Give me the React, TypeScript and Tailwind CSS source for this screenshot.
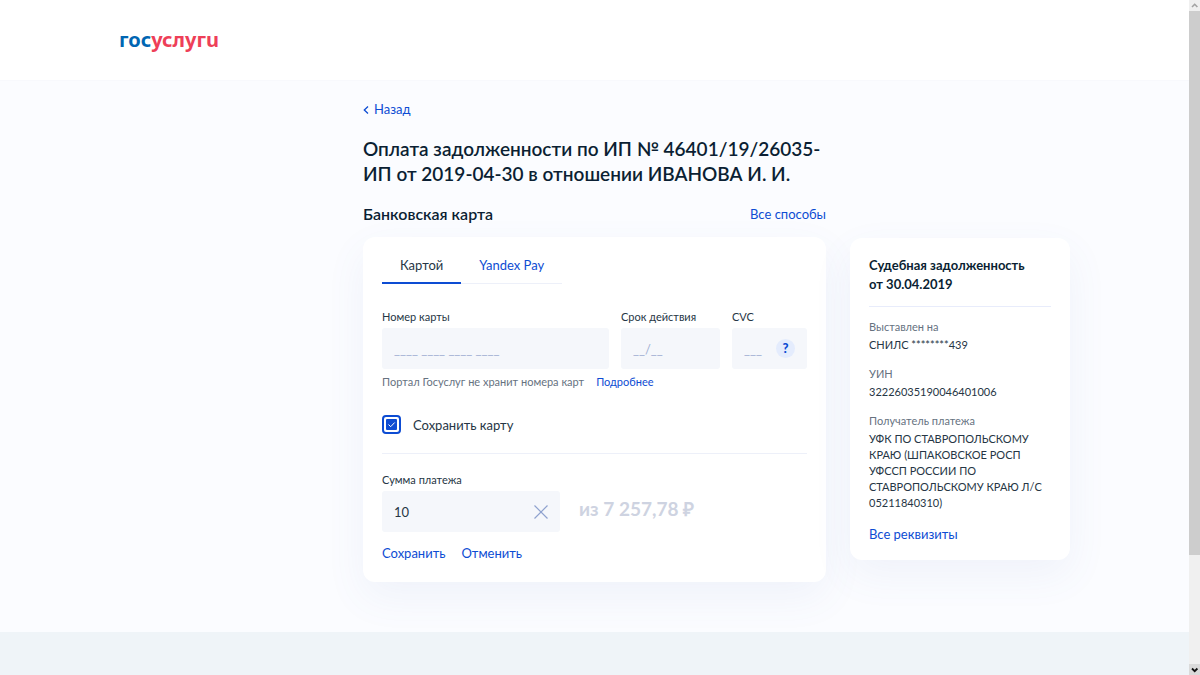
import { useState } from "react";
import type { ReactNode } from "react";

const details = [
  { label: "Выставлен на", value: "СНИЛС ********439" },
  { label: "УИН", value: "32226035190046401006" },
  {
    label: "Получатель платежа",
    value:
      "УФК ПО СТАВРОПОЛЬСКОМУ КРАЮ (ШПАКОВСКОЕ РОСП УФССП РОССИИ ПО СТАВРОПОЛЬСКОМУ КРАЮ Л/С 05211840310)",
  },
];

const tabs = ["Картой", "Yandex Pay"];

function Link({ children, className = "" }: { children: ReactNode; className?: string }) {
  return (
    <a href="#" className={`text-[#0d4cd3] hover:text-[#0b40b3] ${className}`}>
      {children}
    </a>
  );
}

function Header() {
  return (
    <header className="border-b border-[#f8f9fd] bg-white">
      <div className="mx-auto flex h-20 max-w-[951px] items-center">
        <a
          href="#"
          aria-label="госуслуги"
          className="font-['Noto_Sans','Open_Sans',sans-serif] text-[20px] leading-6 font-bold text-[#0066b3]"
        >
          гос<span className="text-[#ee3f58]">услугu</span>
        </a>
      </div>
    </header>
  );
}

function Tabs() {
  const [active, setActive] = useState(0);

  return (
    <div role="tablist" className="flex">
      {tabs.map((tab, i) => (
        <button
          key={tab}
          role="tab"
          type="button"
          aria-selected={i === active}
          onClick={() => setActive(i)}
          className={`h-7 px-[18px] ${
            i === active
              ? "border-b-2 border-[#0d4cd3] pb-2"
              : "border-b border-[#edf0f9] pb-[9px] text-[#0d4cd3]"
          }`}
        >
          {tab}
        </button>
      ))}
    </div>
  );
}

function CardFields() {
  const inputStyle =
    "mt-[3px] h-[41px] w-full rounded-[3px] bg-[#f5f7fb] px-3 placeholder:text-[#a3b1d3] outline-none";

  return (
    <div className="mt-[25px] flex gap-3">
      <div className="flex-1">
        <label htmlFor="number" className="block text-[11px] leading-4">
          Номер карты
        </label>
        <input id="number" placeholder="____ ____ ____ ____" className={inputStyle} />
      </div>
      <div className="w-[99px]">
        <label htmlFor="expires" className="block text-[11px] leading-4">
          Срок действия
        </label>
        <input id="expires" placeholder="__/__" className={inputStyle} />
      </div>
      <div className="w-[75px]">
        <label htmlFor="cvc" className="block text-[11px] leading-4">
          CVC
        </label>
        <div className="relative">
          <input id="cvc" placeholder="___" className={inputStyle} />
          <button
            type="button"
            className="absolute top-[14px] right-3 size-[19px] rounded-full bg-[#e4ecfd] text-[13px] leading-[19px] font-black text-[#0d4cd3]"
          >
            ?
          </button>
        </div>
      </div>
    </div>
  );
}

function SaveCard() {
  const [checked, setChecked] = useState(true);

  return (
    <label className="mt-[25px] flex items-center gap-3">
      <span className="relative size-[19px]">
        <input
          type="checkbox"
          checked={checked}
          onChange={(e) => setChecked(e.target.checked)}
          className="block size-[19px] appearance-none rounded-[4px] border-2 border-[#0d4cd3] bg-white"
        />
        {checked && (
          <svg viewBox="0 0 19 19" className="pointer-events-none absolute inset-0" fill="none">
            <rect x="4" y="4" width="11" height="11" rx="1" fill="#0d4cd3" />
            <path d="M6.5 9.5l2.2 2.2 4-4.2" stroke="#fff" strokeWidth="1" />
          </svg>
        )}
      </span>
      Сохранить карту
    </label>
  );
}

function Amount() {
  const [amount, setAmount] = useState("10");

  return (
    <div className="mt-[19px] border-t border-[#edf0f9] pt-[18px]">
      <label htmlFor="amount" className="block text-[11px] leading-4">
        Сумма платежа
      </label>
      <div className="mt-[3px] flex items-center gap-[19px]">
        <div className="relative w-[178px]">
          <input
            id="amount"
            value={amount}
            onChange={(e) => setAmount(e.target.value)}
            className="h-[41px] w-full rounded-[3px] bg-[#f5f7fb] pr-10 pl-3 outline-none"
          />
          <button
            type="button"
            aria-label="Очистить"
            onClick={() => setAmount("")}
            className="absolute top-[14px] right-3"
          >
            <svg width="14" height="14" viewBox="0 0 14 14" stroke="#8fa2cf" strokeWidth="1.2">
              <path d="M.5.5l13 13M13.5.5l-13 13" />
            </svg>
          </button>
        </div>
        <span className="pb-[5px] text-[19px] leading-6 font-bold text-[#ced3e1]">из 7 257,78 ₽</span>
      </div>
      <div className="mt-3 flex gap-4 text-[#0d4cd3]">
        <button type="button">Сохранить</button>
        <button type="button">Отменить</button>
      </div>
    </div>
  );
}

function Summary() {
  return (
    <aside className="mt-[157px] w-[220px] shrink-0 rounded-xl bg-white px-[19px] pt-[18px] pb-[17px] shadow-[0_15px_40px_rgba(80,120,190,0.07)]">
      <h3 className="border-b border-[#e8ecfb] pb-3 leading-[19px] font-bold whitespace-nowrap text-[#0b1f33]">
        Судебная задолженность
        <br />
        от 30.04.2019
      </h3>
      <dl className="mt-3 flex flex-col gap-[13px] text-[11px] leading-4">
        {details.map((item) => (
          <div key={item.label}>
            <dt className="text-[#66727f]">{item.label}</dt>
            <dd className="mt-0.5 -mr-1">{item.value}</dd>
          </div>
        ))}
      </dl>
      <Link className="mt-[14px] block">Все реквизиты</Link>
    </aside>
  );
}

function Scrollbar() {
  return (
    <div aria-hidden="true" className="flex h-screen w-[11px] shrink-0 flex-col bg-[#f0f0f0]">
      <svg width="11" height="11" viewBox="0 0 11 11" fill="none" stroke="#a3a3a3" strokeWidth="1.6">
        <path d="M3 7l2.7-2.7L8.4 7" />
      </svg>
      <div className="grow-5 bg-[#cdcdcd]" />
      <div className="grow" />
      <svg width="11" height="11" viewBox="0 0 11 11" fill="none" stroke="#111" strokeWidth="1.8">
        <path d="M0 0h11v11H0z" fill="#dadada" stroke="none" />
        <path d="M3 4.5l2.7 2.7L8.4 4.5" />
      </svg>
    </div>
  );
}

export default function App() {
  return (
    <div className="flex h-screen overflow-hidden font-['Lato',sans-serif] text-[13px] leading-[18px] text-[#263645]">
      <div className="flex flex-1 flex-col bg-[#fbfcff]">
        <Header />
        <div className="mx-auto flex w-full max-w-[951px] justify-end gap-6 pb-[50px]">
          <main className="w-[463px]">
            <a href="#" className="mt-[19px] flex items-center gap-[5px] text-[#0d4cd3]">
              <svg width="6" height="8" viewBox="0 0 6 8" fill="none" stroke="currentColor" strokeWidth="1.3" className="mt-0.5">
                <path d="M5 .5L1.3 4 5 7.5" />
              </svg>
              Назад
            </a>
            <h1 className="mt-[18px] text-[19px] leading-[25px] font-semibold text-[#0b1f33]">
              Оплата задолженности по ИП № 46401/19/26035-ИП от 2019-04-30 в отношении ИВАНОВА И. И.
            </h1>
            <div className="mt-[18px] flex items-center justify-between">
              <h2 className="text-[16px] leading-5 font-semibold text-[#0b1f33]">Банковская карта</h2>
              <Link>Все способы</Link>
            </div>
            <section className="mt-[13px] rounded-xl bg-white px-[19px] pt-[19px] pb-5 shadow-[0_15px_40px_rgba(80,120,190,0.07)]">
              <Tabs />
              <CardFields />
              <p className="mt-[5px] flex gap-3 text-[11px] leading-4 text-[#66727f]">
                Портал Госуслуг не хранит номера карт
                <Link>Подробнее</Link>
              </p>
              <SaveCard />
              <Amount />
            </section>
          </main>
          <div>
            <Summary />
          </div>
        </div>
        <footer className="relative flex-1 bg-[#eff4f8]" />
      </div>
      <Scrollbar />
    </div>
  );
}
